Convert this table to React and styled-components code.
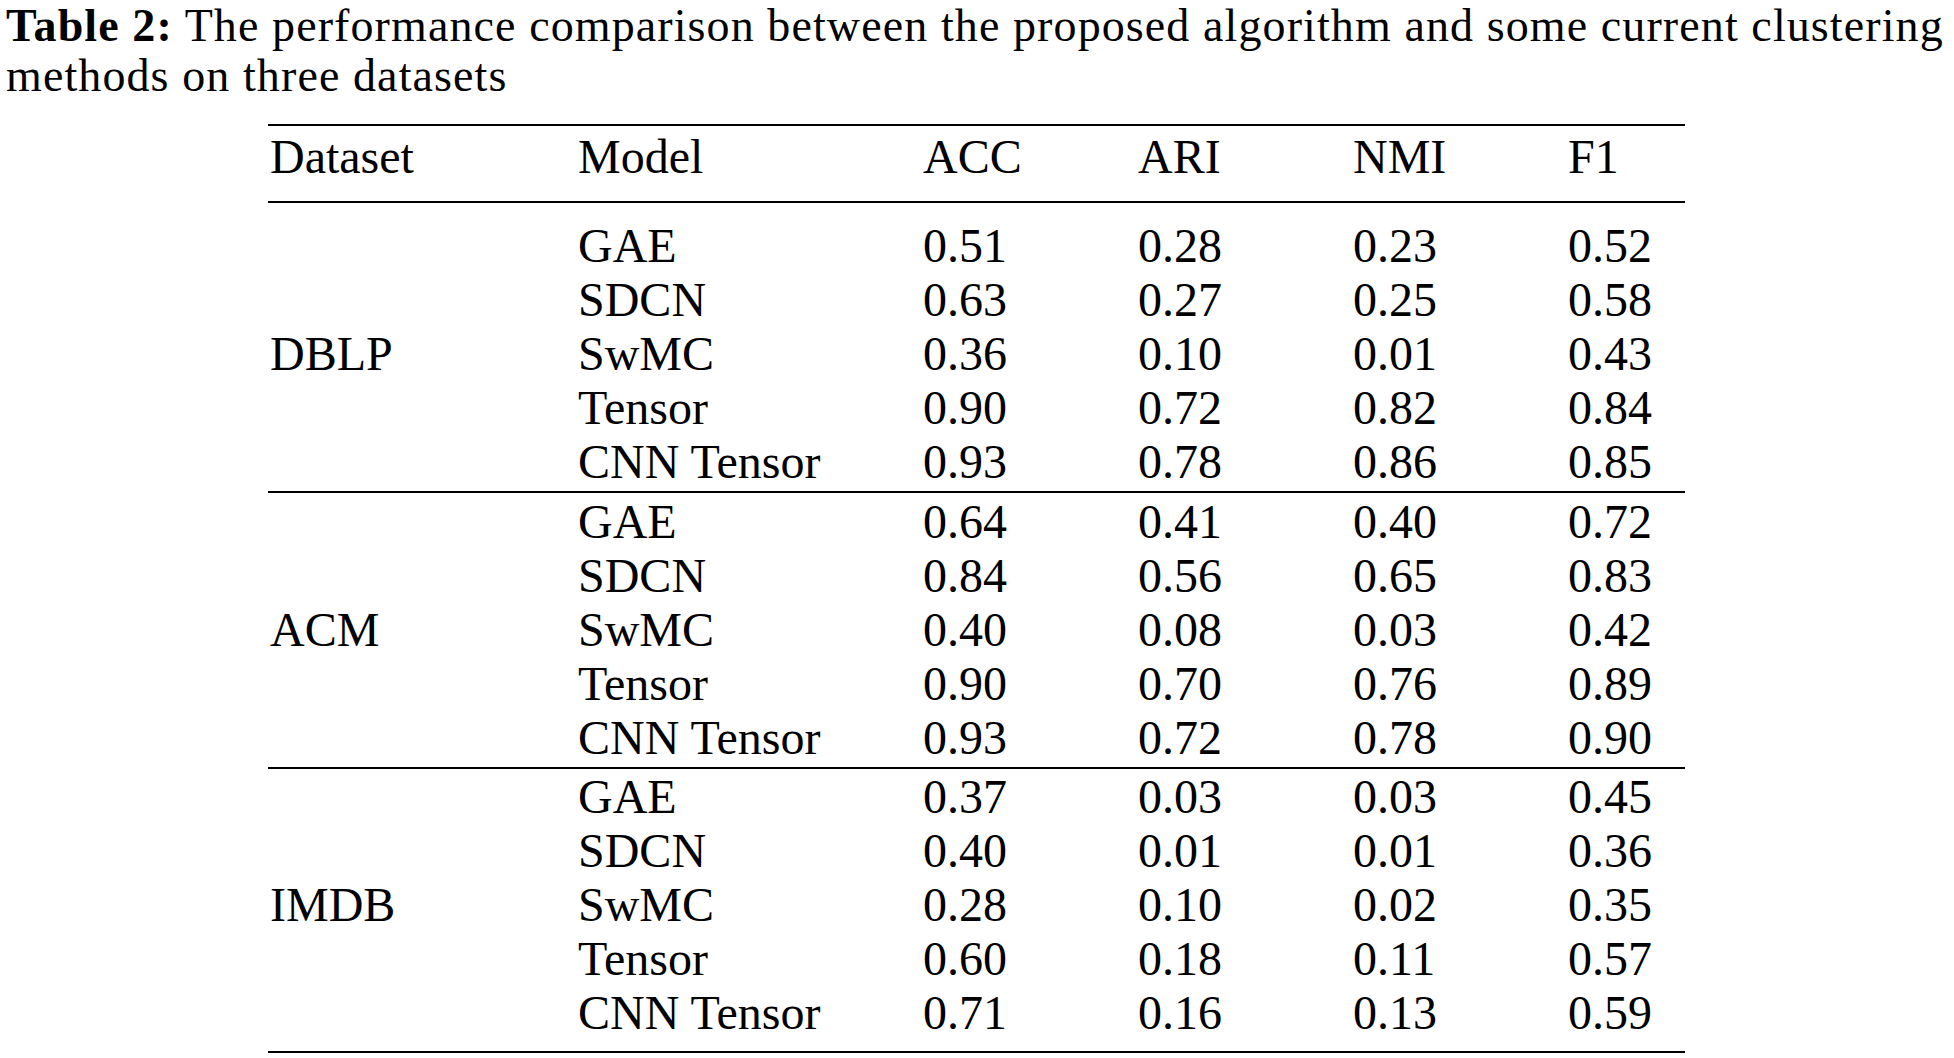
import React from "react";
import styled, { createGlobalStyle } from "styled-components";

const GlobalStyle = createGlobalStyle`
  html, body {
    margin: 0;
    padding: 0;
    background: #ffffff;
  }
  body {
    font-family: "Liberation Serif", "Times New Roman", serif;
    color: #000000;
    overflow: hidden;
  }
`;

const Page = styled.div`
  width: 1954px;
  height: 1058px;
  box-sizing: border-box;
`;

const Caption = styled.div`
  padding-left: 6px;
  font-size: 46px;
  letter-spacing: 1.1px;
  white-space: nowrap;
`;

const CaptionLine = styled.div`
  line-height: ${(p) => p.$lh};
`;

const CaptionLabel = styled.b`
  font-weight: 700;
`;

const Table = styled.div`
  margin: 24px 0 0 268px;
  width: 1417px;
  border-top: 2px solid #000;
  border-bottom: 2px solid #000;
  font-size: 48px;
  line-height: 54px;
`;

const columns = "308px 345px 215px 215px 215px 1fr";

const HeaderRow = styled.div`
  display: grid;
  grid-template-columns: ${columns};
  padding: 4px 0 17px 2px;
`;

const Group = styled.div`
  display: grid;
  grid-template-columns: ${columns};
  grid-auto-rows: 54px;
  border-top: 2px solid #000;
  padding: ${(p) => p.$pad} 0 ${(p) => p.$padBottom} 2px;
`;

const Cell = styled.div`
  white-space: nowrap;
`;

const DatasetCell = styled.div`
  grid-column: 1;
  grid-row: 3;
  white-space: nowrap;
`;

const groups = [
  {
    name: "DBLP",
    pad: "16px",
    padBottom: "2px",
    rows: [
      ["GAE", "0.51", "0.28", "0.23", "0.52"],
      ["SDCN", "0.63", "0.27", "0.25", "0.58"],
      ["SwMC", "0.36", "0.10", "0.01", "0.43"],
      ["Tensor", "0.90", "0.72", "0.82", "0.84"],
      ["CNN Tensor", "0.93", "0.78", "0.86", "0.85"],
    ],
  },
  {
    name: "ACM",
    pad: "2px",
    padBottom: "2px",
    rows: [
      ["GAE", "0.64", "0.41", "0.40", "0.72"],
      ["SDCN", "0.84", "0.56", "0.65", "0.83"],
      ["SwMC", "0.40", "0.08", "0.03", "0.42"],
      ["Tensor", "0.90", "0.70", "0.76", "0.89"],
      ["CNN Tensor", "0.93", "0.72", "0.78", "0.90"],
    ],
  },
  {
    name: "IMDB",
    pad: "1px",
    padBottom: "11px",
    rows: [
      ["GAE", "0.37", "0.03", "0.03", "0.45"],
      ["SDCN", "0.40", "0.01", "0.01", "0.36"],
      ["SwMC", "0.28", "0.10", "0.02", "0.35"],
      ["Tensor", "0.60", "0.18", "0.11", "0.57"],
      ["CNN Tensor", "0.71", "0.16", "0.13", "0.59"],
    ],
  },
];

const headers = ["Dataset", "Model", "ACC", "ARI", "NMI", "F1"];

export default function App() {
  return (
    <Page>
      <GlobalStyle />
      <Caption>
        <CaptionLine $lh="51px">
          <CaptionLabel>Table 2:</CaptionLabel> The performance comparison between the proposed algorithm and some current clustering
        </CaptionLine>
        <CaptionLine $lh="49px">methods on three datasets</CaptionLine>
      </Caption>
      <Table>
        <HeaderRow>
          {headers.map((h) => (
            <Cell key={h}>{h}</Cell>
          ))}
        </HeaderRow>
        {groups.map((g) => (
          <Group key={g.name} $pad={g.pad} $padBottom={g.padBottom}>
            <DatasetCell>{g.name}</DatasetCell>
            {g.rows.map((r, ri) =>
              r.map((v, ci) => (
                <Cell
                  key={`${ri}-${ci}`}
                  style={{ gridRow: ri + 1, gridColumn: ci + 2 }}
                >
                  {v}
                </Cell>
              ))
            )}
          </Group>
        ))}
      </Table>
    </Page>
  );
}
